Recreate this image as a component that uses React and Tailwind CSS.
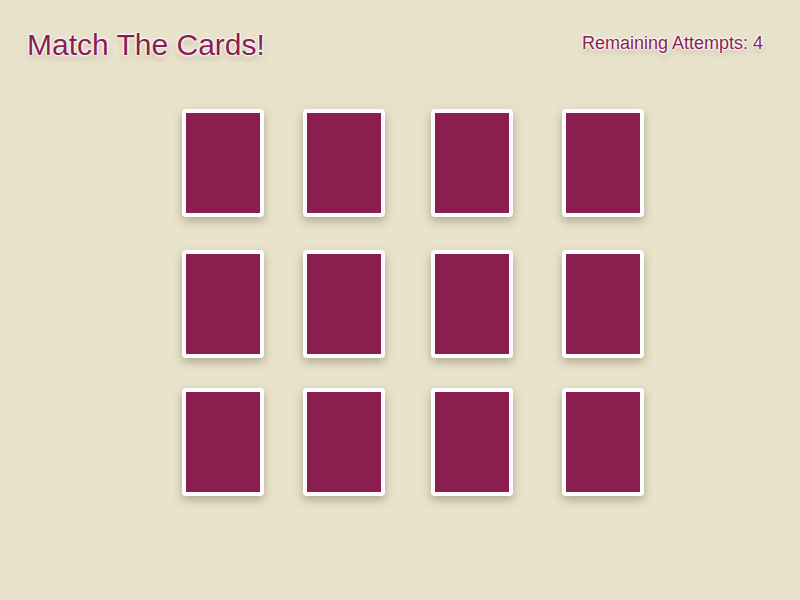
import React from "react";

const cols = ["w-[121px]", "w-[128px]", "w-[131px]", "w-[82px]"];

function Card() {
  return (
    <div className="w-[82px] h-[108px] rounded-[4px] bg-white p-[4px] shadow-[0_4px_10px_rgba(70,60,20,0.35)]">
      <div className="w-full h-full bg-[#8a1f4f]" />
    </div>
  );
}

export default function App() {
  const rows = ["h-[141px]", "h-[138px]", "h-[108px]"];
  return (
    <div className="w-[800px] h-[600px] bg-[#e9e3cc] overflow-hidden font-[Liberation_Sans,Arial,sans-serif] text-[#8a1f4f]">
      <div className="flex justify-between items-start pt-[30px] pl-[27px] pr-[37px]">
        <h1 className="text-[30px] leading-[30px] [text-shadow:0_0_2px_#fff,0_0_2px_#fff,0_0_3px_#fff,0_0_4px_#fff,0_3px_6px_rgba(80,60,20,0.35)]">
          Match The Cards!
        </h1>
        <div className="mt-[4px] text-[18px] leading-[18px] [text-shadow:0_0_2px_#fff,0_0_2px_#fff,0_0_3px_#fff,0_0_4px_#fff,0_3px_6px_rgba(80,60,20,0.35)]">
          Remaining Attempts: 4
        </div>
      </div>
      <div className="ml-[182px] mt-[49px] flex flex-col">
        {rows.map((r, i) => (
          <div key={i} className={`flex ${r}`}>
            {cols.map((c, j) => (
              <div key={j} className={c}>
                <Card />
              </div>
            ))}
          </div>
        ))}
      </div>
    </div>
  );
}
